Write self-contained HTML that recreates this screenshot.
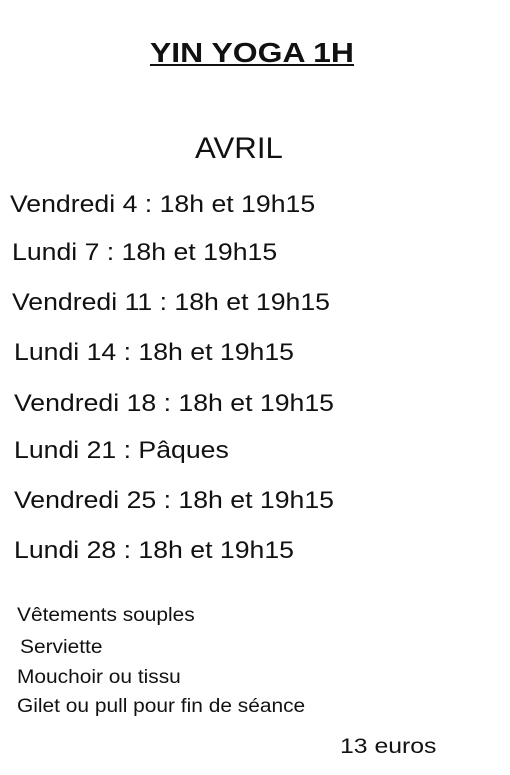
<!DOCTYPE html>
<html><head><style>
body{margin:0;width:510px;height:775px;background:#fff;position:relative;overflow:hidden;font-family:"Liberation Sans",sans-serif;color:#111}
div{position:absolute;white-space:nowrap;transform-origin:0 0}
.l{font-size:24px;transform:scaleX(1.11)}
.s{font-size:19px;transform:scaleX(1.1)}
</style></head><body>
<div style="left:150px;top:37px;font-size:28px;font-weight:bold;text-decoration:underline;transform:scaleX(1.14)">YIN YOGA 1H</div>
<div style="left:195px;top:132px;font-size:30px;transform:scaleX(1.04)">AVRIL</div>
<div class="l" style="left:10px;top:191px">Vendredi 4 : 18h et 19h15</div>
<div class="l" style="left:12px;top:239px">Lundi 7 : 18h et 19h15</div>
<div class="l" style="left:12px;top:289px">Vendredi 11 : 18h et 19h15</div>
<div class="l" style="left:14px;top:339px">Lundi 14 : 18h et 19h15</div>
<div class="l" style="left:14px;top:390px">Vendredi 18 : 18h et 19h15</div>
<div class="l" style="left:14px;top:437px">Lundi 21 : Pâques</div>
<div class="l" style="left:14px;top:487px">Vendredi 25 : 18h et 19h15</div>
<div class="l" style="left:14px;top:537px">Lundi 28 : 18h et 19h15</div>
<div class="s" style="left:17px;top:605px">Vêtements souples</div>
<div class="s" style="left:20px;top:637px">Serviette</div>
<div class="s" style="left:17px;top:667px">Mouchoir ou tissu</div>
<div class="s" style="left:17px;top:696px">Gilet ou pull pour fin de séance</div>
<div style="left:340px;top:735px;font-size:21px;transform:scaleX(1.18)">13 euros</div>
</body></html>
